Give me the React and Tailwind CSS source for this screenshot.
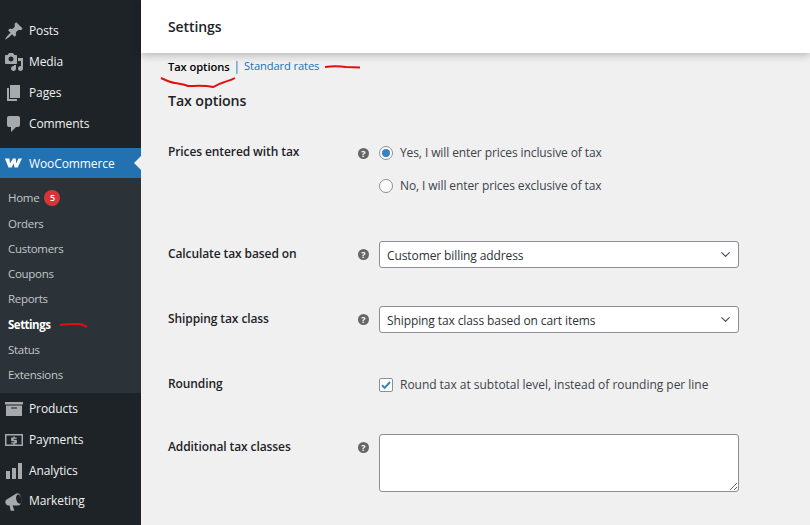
import { ChevronDown } from "lucide-react";

const mainItems = [
  { label: "Posts", d: "M10.44 3.02l1.82-1.82 6.36 6.35-1.83 1.82c-1.05-.68-2.48-.57-3.41.36l-.75.75c-.92.93-1.04 2.35-.35 3.41l-1.83 1.82-2.41-2.41-2.8 2.79c-.42.42-3.38 2.71-3.8 2.29s1.86-3.39 2.28-3.81l2.79-2.79L4.1 9.36l1.83-1.82c1.05.69 2.48.57 3.4-.36l.75-.75c.93-.92 1.05-2.35.36-3.41z" },
  { label: "Media", d: "M13 11V4c0-.55-.45-1-1-1h-1.67L9 1H5L3.67 3H2c-.55 0-1 .45-1 1v7c0 .55.45 1 1 1h10c.55 0 1-.45 1-1zM7 4.5c1.38 0 2.5 1.12 2.5 2.5S8.38 9.5 7 9.5 4.5 8.38 4.5 7 5.62 4.5 7 4.5zM14 6h5v10.5c0 1.38-1.12 2.5-2.5 2.5S14 17.88 14 16.5s1.12-2.5 2.5-2.5c.17 0 .34.02.5.05V9h-3V6zm-4 8.05V13h2v3.5c0 1.38-1.12 2.5-2.5 2.5S7 17.88 7 16.5 8.12 14 9.5 14c.17 0 .34.02.5.05z" },
  { label: "Pages", d: "M6 15V2h10v13H6zm-1 1h8v2H3V5h2v11z" },
  { label: "Comments", d: "M5 2h9c1.1 0 2 .9 2 2v7c0 1.1-.9 2-2 2h-2l-5 5v-5H5c-1.1 0-2-.9-2-2V4c0-1.1.9-2 2-2z" },
];

const subItems = ["Orders", "Customers", "Coupons", "Reports"];

const bottomItems = [
  { label: "Products", d: "M19 3v2.5H1V3h18zM2 6.5h16V17H2V6.5zm11 3v-1H7v1h6z" },
  { label: "Payments", d: "M1 4h18v12H1V4zm1.5 1.5v9h15v-9h-15zM9.3 6.5h1.4v1h2v1.3h-3v.9h2.2c.6 0 1 .4 1 1v1.8c0 .6-.4 1-1 1h-1.2v1H9.3v-1h-2v-1.3h3v-1H8.1c-.6 0-1-.4-1-1V8.5c0-.6.4-1 1-1h1.2v-1z" },
  { label: "Analytics", d: "M18 18V2h-4v16h4zm-6 0V7H8v11h4zm-6 0v-8H2v8h4z" },
  { label: "Marketing", d: "M13.5 2.2c-.4 0-1 .3-1.5.6L3 8.2c-1.4.7-2 2.2-1.5 3.9.4 1.6 1.6 2.6 2.9 2.5h1.2l1 4.6c0 .3.3.6.6.6h2.6c.4 0 .6-.3.5-.6l-1.8-4.6h5.4c2.9-.4 4.4-3.9 3.4-7.9-.8-3-2.7-4.7-3.8-4.5zm1.2 1.5c1.2.5 2.3 2 2.8 3.8.5 2 .2 4-.9 4.9-.5.4-1 .4-1.6.2-1.2-.5-2.3-2-2.7-3.8-.5-2-.2-4 .9-4.9.4-.4 1-.4 1.5-.2z" },
];

function MenuItem({ item, rowClass }) {
  return (
    <div className={`flex items-center ${rowClass}`}>
      <svg viewBox="0 0 20 20" className="w-5 h-5 ml-[4px] mr-[5px] shrink-0 fill-[#a7aaad]">
        <path d={item.d} />
      </svg>
      <span>{item.label}</span>
    </div>
  );
}

function Help() {
  return (
    <span className="ml-[1px] w-[11px] h-[11px] rounded-full bg-[#666] text-white text-[9px] font-bold leading-none flex items-center justify-center tracking-normal">
      ?
    </span>
  );
}

function Select({ value }) {
  return (
    <div className="w-[360px] h-[27px] bg-white border border-[#8c8f94] rounded-[3px] flex items-center justify-between pl-[7px] pr-[5px] text-[#2c3338]">
      <span className="mt-[2px]">{value}</span>
      <ChevronDown size={15} strokeWidth={2} className="text-[#50575e]" />
    </div>
  );
}

export default function App() {
  return (
    <div className="w-[810px] h-[525px] overflow-hidden flex bg-[#f0f0f1] relative font-['Open_Sans',sans-serif] text-[12px] tracking-[-0.1px] text-[#3c434a]">
      {/* Sidebar */}
      <aside className="w-[141px] h-full bg-[#1d2327] text-[#f0f0f1] shrink-0 relative">
        <div className="pt-[16px]">
          {mainItems.map((item) => (
            <MenuItem key={item.label} item={item} rowClass="h-[30.8px]" />
          ))}
        </div>
        <div className="mt-[9px] h-[30px] bg-[#2271b1] text-white flex items-center relative">
          <svg viewBox="0 0 20 12" className="w-[18px] h-[12px] ml-[4px] mr-[7px] fill-white">
            <path d="M1 1h5l.6 5.5L10 1h3l.6 5.5L16 1h4l-4.8 10h-3.6l-.6-4.6L8.5 11H5z" />
          </svg>
          <span className="mt-[1px]">WooCommerce</span>
          <span className="absolute right-0 top-[8px] border-y-[7px] border-y-transparent border-r-[7px] border-r-[#f0f0f1]" />
        </div>
        <div className="bg-[#2c3338] h-[215px] pt-[7px] text-[#c3c6c9] text-[11.5px] tracking-[-0.3px]">
          <div className="h-[25.3px] flex items-center pl-[8px]">
            Home
            <span className="ml-[5px] w-[16px] h-[16px] rounded-full bg-[#d63638] text-white text-[9px] font-semibold flex items-center justify-center">5</span>
          </div>
          {subItems.map((label) => (
            <div key={label} className="h-[25.3px] flex items-center pl-[8px]">{label}</div>
          ))}
          <div className="h-[25.3px] flex items-center pl-[8px] text-white font-bold tracking-[-0.5px]">Settings</div>
          <div className="h-[25.3px] flex items-center pl-[8px]">Status</div>
          <div className="h-[25.3px] flex items-center pl-[8px]">Extensions</div>
        </div>
        <div className="pt-[0.4px]">
          {bottomItems.map((item) => (
            <MenuItem key={item.label} item={item} rowClass="h-[30.8px]" />
          ))}
        </div>
      </aside>

      {/* Main */}
      <main className="flex-1 min-w-0">
        <header className="h-[53px] bg-white flex items-center pl-[27px] shadow-[0_2px_8px_rgba(0,0,0,0.25)] text-[14px] font-semibold text-[#1d2327] relative">
          <span>Settings</span>
        </header>

        <div className="pl-[27px]">
          <div className="flex items-center h-[28px]">
            <span className="font-semibold text-black text-[11.2px] mt-[1px]">Tax options</span>
            <span className="mx-[4px] text-[#2271b1]">|</span>
            <span className="text-[#2271b1] text-[11.2px] mt-[-1px] tracking-[-0.12px]">Standard rates</span>
          </div>

          <h2 className="mt-[10px] text-[14.2px] leading-[20px] font-semibold text-[#1d2327]">Tax options</h2>

          <div className="mt-[34px] flex">
            <div className="w-[189px] font-semibold text-[#1d2327] leading-[16px] mt-[-1px]">Prices entered with tax</div>
            <div className="w-[22px] pt-[3px]"><Help /></div>
            <div className="flex flex-col gap-[17px]">
              <label className="flex items-center h-[16px]">
                <span className="w-[14px] h-[14px] rounded-full bg-white border border-[#8c8f94] flex items-center justify-center mr-[7px]">
                  <span className="w-[8px] h-[8px] rounded-full bg-[#3582c4]" />
                </span>
                Yes, I will enter prices inclusive of tax
              </label>
              <label className="flex items-center h-[16px]">
                <span className="w-[14px] h-[14px] rounded-full bg-white border border-[#8c8f94] mr-[7px]" />
                No, I will enter prices exclusive of tax
              </label>
            </div>
          </div>

          <div className="mt-[47px] flex">
            <div className="w-[189px] font-semibold text-[#1d2327] leading-[16px] mt-[5px]">Calculate tax based on</div>
            <div className="w-[22px] pt-[8px]"><Help /></div>
            <Select value="Customer billing address" />
          </div>

          <div className="mt-[38px] flex">
            <div className="w-[189px] font-semibold text-[#1d2327] leading-[16px] mt-[5px]">Shipping tax class</div>
            <div className="w-[22px] pt-[8px]"><Help /></div>
            <Select value="Shipping tax class based on cart items" />
          </div>

          <div className="mt-[44px] flex">
            <div className="w-[189px] font-semibold text-[#1d2327] leading-[16px] mt-[-1px]">Rounding</div>
            <div className="w-[22px]" />
            <label className="flex items-center h-[16px] tracking-[-0.03px]">
              <span className="w-[14px] h-[14px] rounded-[2px] bg-white border border-[#8c8f94] flex items-center justify-center mr-[7px]">
                <svg viewBox="0 0 12 12" className="w-[12px] h-[12px] fill-none stroke-[#3582c4] stroke-[2]">
                  <path d="M2 6.2l2.7 2.7L10 3" />
                </svg>
              </span>
              Round tax at subtotal level, instead of rounding per line
            </label>
          </div>

          <div className="mt-[41px] flex">
            <div className="w-[189px] font-semibold text-[#1d2327] leading-[16px] mt-[5px]">Additional tax classes</div>
            <div className="w-[22px] pt-[8px]"><Help /></div>
            <textarea className="w-[360px] h-[58px] bg-white border border-[#8c8f94] rounded-[3px]" />
          </div>
        </div>
      </main>

      {/* Red marker strokes */}
      <svg viewBox="0 0 810 525" className="absolute inset-0 w-[810px] h-[525px] pointer-events-none fill-none stroke-[#e01010] stroke-[2]">
        <path d="M161 78c4 2 8 4 14 5 5 1 9 1 13 3 8 0 16-1 25 1 3-1 5-3 9-4 4-2 8-2 13-5" />
        <path d="M325 67c7-1 14-1 21 0l14 .5" />
        <path d="M60 325c7-1 13-1 19-1 3 0 5 1 8 3" />
      </svg>
    </div>
  );
}
